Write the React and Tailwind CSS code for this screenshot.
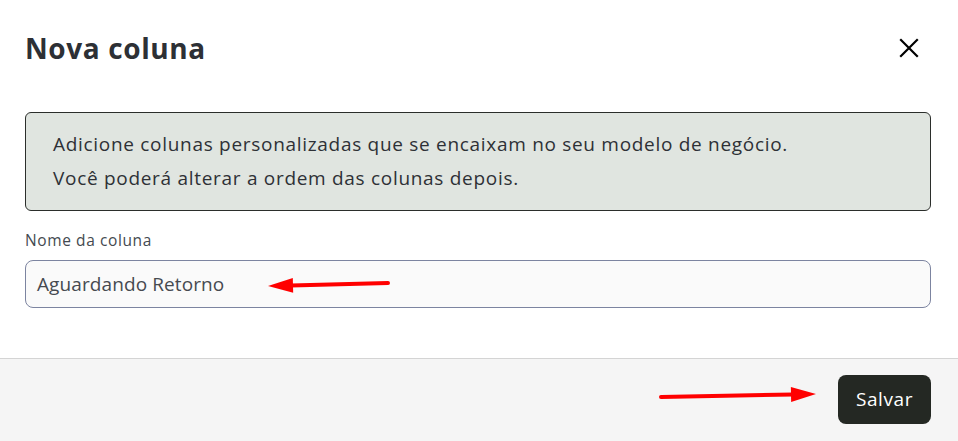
import React from 'react';

function RedArrow({ className, x1, y1, x2, y2, w, h }) {
  // arrow from (x1,y1) tail to (x2,y2) tip, in local svg coords
  const dx = x2 - x1;
  const dy = y2 - y1;
  const len = Math.hypot(dx, dy);
  const ux = dx / len;
  const uy = dy / len;
  const hl = 25;
  const hw = 7.5;
  const bx = x2 - ux * hl;
  const by = y2 - uy * hl;
  const p1 = `${bx - uy * hw},${by + ux * hw}`;
  const p2 = `${bx + uy * hw},${by - ux * hw}`;
  return (
    <svg className={className} width={w} height={h} viewBox={`0 0 ${w} ${h}`}>
      <line x1={x1} y1={y1} x2={bx + ux * 2} y2={by + uy * 2} stroke="#ff0000" strokeWidth="4" strokeLinecap="round" />
      <polygon points={`${x2},${y2} ${p1} ${p2}`} fill="#ff0000" />
    </svg>
  );
}

export default function App() {
  return (
    <div className="w-[958px] h-[441px] bg-white overflow-hidden flex flex-col text-[#2e3136]" style={{ fontFamily: '"Open Sans", "Noto Sans", sans-serif' }}>
      <div className="relative flex-1 flex flex-col pl-[25px] pr-[27px]">
        <div className="flex items-center justify-between h-[98px] pb-[2px]">
          <h1 className="text-[28px] font-bold text-[#2d3035] tracking-[0.6px]">Nova coluna</h1>
          <button className="mr-[12px] text-black">
            <svg width="20" height="20" viewBox="0 0 20 20">
              <path d="M2 2 L18 18 M18 2 L2 18" stroke="currentColor" strokeWidth="2.2" strokeLinecap="square" />
            </svg>
          </button>
        </div>
        <div className="mt-[14px] border border-[#2b2e2b] rounded-[6px] bg-[#e0e5e0] pl-[27px] pr-4 pt-[14px] pb-[15px] text-[19px] leading-[34px] tracking-[0.7px] text-[#2e3136]">
          <p>Adicione colunas personalizadas que se encaixam no seu modelo de negócio.</p>
          <p>Você poderá alterar a ordem das colunas depois.</p>
        </div>
        <label className="mt-[18px] text-[15.5px] leading-[22px] tracking-[0.6px] text-[#444a50]">Nome da coluna</label>
        <div className="mt-[9px] h-[48px] border border-[#7c84a0] rounded-[8px] bg-[#fafafa] flex items-center px-[11px] text-[19px] tracking-[0.1px] text-[#464a50]">
          Aguardando Retorno
        </div>
        <RedArrow className="absolute left-[265px] top-[276px]" w={128} h={20} x1={123} y1={7} x2={3} y2={10} />
      </div>
      <div className="relative h-[83px] border-t border-[#d4d4d4] bg-[#f5f5f5] flex items-center justify-end px-[27px]">
        <RedArrow className="absolute left-[655px] top-[25px]" w={166} h={22} x1={6} y1={13} x2={161} y2={10} />
        <button className="h-[49px] w-[93px] rounded-[8px] bg-[#242823] text-white text-[19px] tracking-[0.6px] font-medium mb-[2px]">Salvar</button>
      </div>
    </div>
  );
}
